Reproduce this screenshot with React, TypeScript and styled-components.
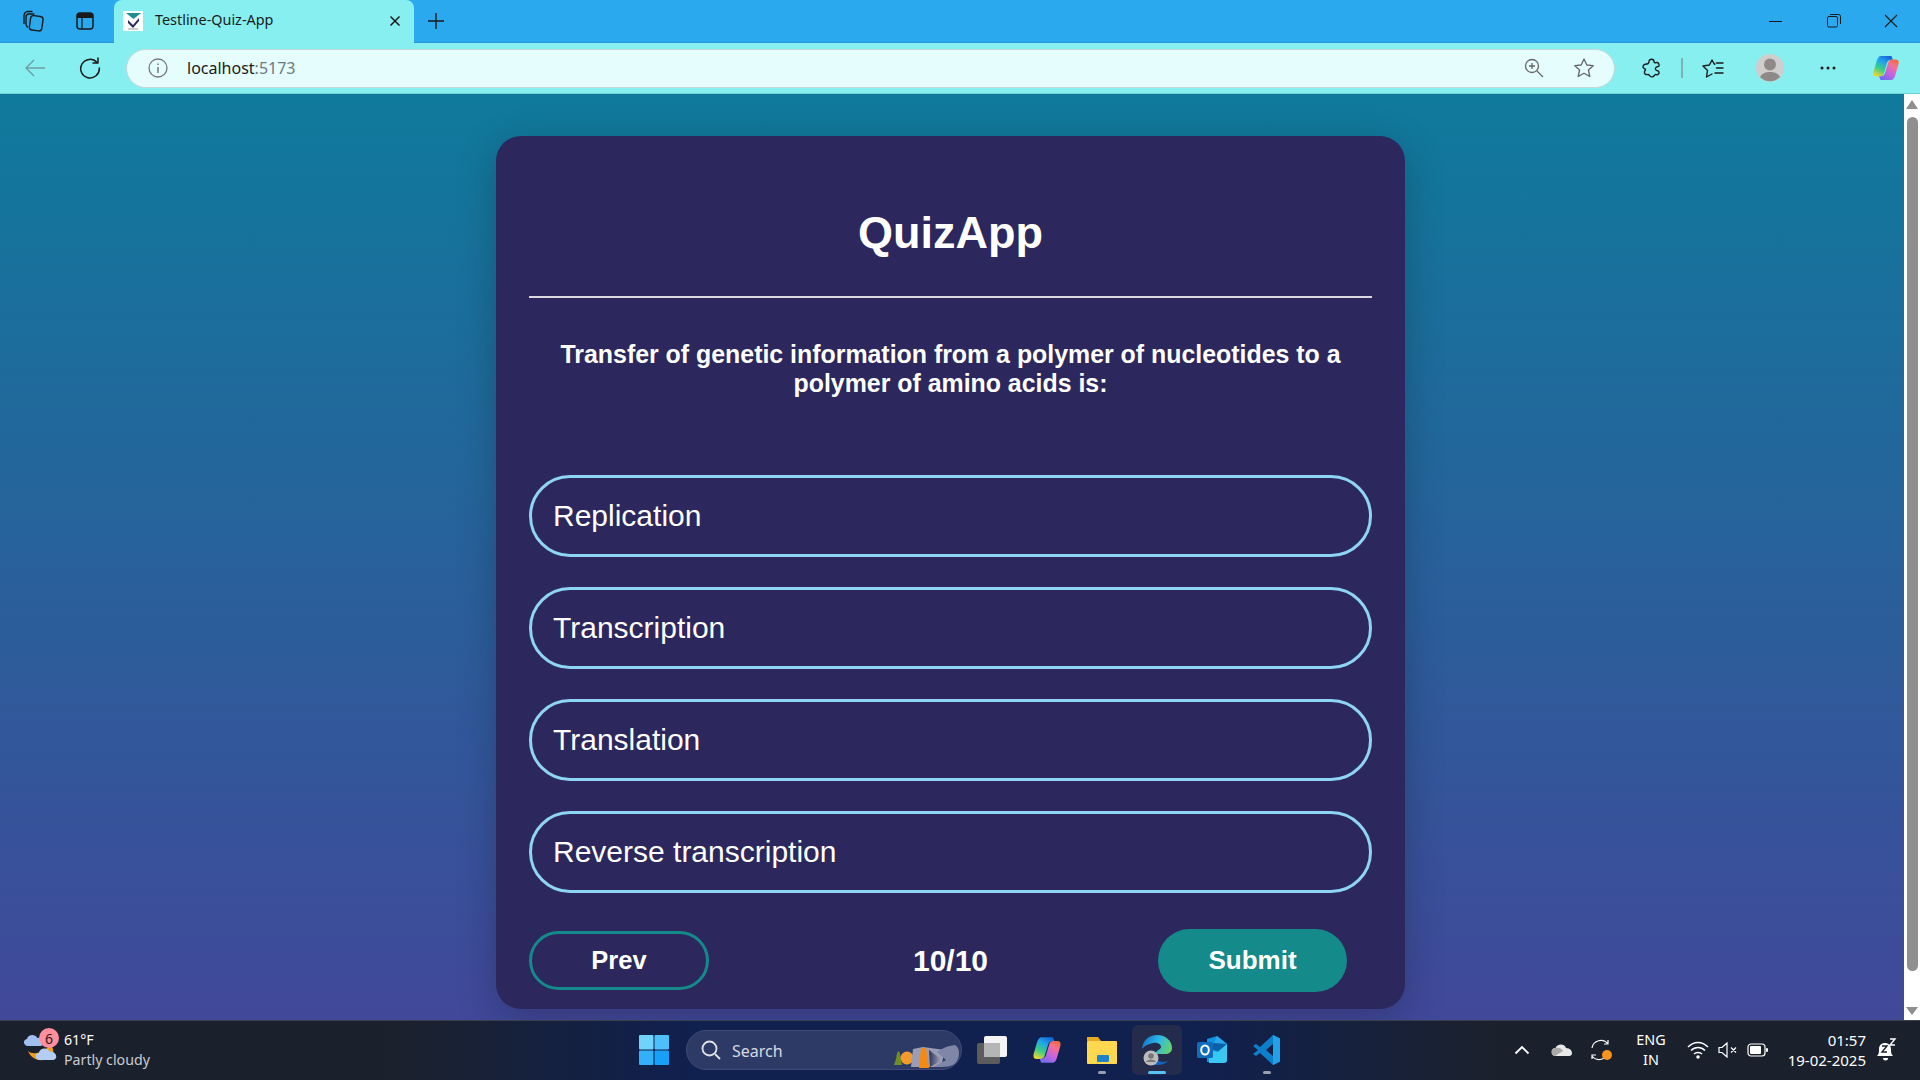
import React from "react";
import styled, { createGlobalStyle } from "styled-components";

const Global = createGlobalStyle`
  html, body { margin: 0; padding: 0; height: 100%; overflow: hidden; }
  body { font-family: "Liberation Sans", Arial, sans-serif; }
  * { box-sizing: border-box; }
`;
const Shell = styled.div`width:1920px;height:1080px;display:flex;flex-direction:column;overflow:hidden;`;
const TabStrip = styled.div`height:43px;background:#2aa9ee;border-bottom:1px solid #2497d6;display:flex;align-items:flex-start;position:relative;`;
const StripIcon = styled.div<{ $w: number }>`width:${p => p.$w}px;height:42px;display:flex;align-items:center;justify-content:center;flex:none;`;
const Tab = styled.div`width:300px;height:43px;margin-left:9px;background:#87eff0;border-radius:8px 8px 0 0;display:flex;align-items:center;padding:0 13px 1px 9px;flex:none;margin-bottom:-1px;position:relative;z-index:1;`;
const Favicon = styled.div`width:20px;height:20px;background:#fff;flex:none;display:flex;align-items:center;justify-content:center;`;
const TabTitle = styled.span`font-family:"Noto Sans","Open Sans",sans-serif;font-size:14.4px;line-height:20px;padding-bottom:2px;color:#1b1b1b;margin-left:12px;flex:1;`;
const WindowControls = styled.div`margin-left:auto;display:flex;height:42px;`;
const WinBtn = styled.div`width:57.5px;height:42px;display:flex;align-items:center;justify-content:center;`;
const Toolbar = styled.div`height:51px;background:#87eff0;border-bottom:1px solid #6fd4d6;display:flex;align-items:center;flex:none;`;
const NavBtn = styled.div<{ $w: number }>`width:${p => p.$w}px;height:40px;display:flex;align-items:center;justify-content:center;flex:none;`;
const Address = styled.div`width:1489px;height:39px;margin-left:16px;border-radius:20px;background:#e6fdfd;border:1px solid #c5d8d8;display:flex;align-items:center;padding:0 5px 0 21px;flex:none;`;
const Url = styled.span`font-family:"Noto Sans","Open Sans",sans-serif;font-size:16px;color:#1a1a1a;margin-left:19px;flex:1;`;
const Port = styled.span`color:#6d7a7d;`;
const AddrIcon = styled.div`width:50px;display:flex;align-items:center;justify-content:center;`;
const ToolRight = styled.div`display:flex;align-items:center;flex:1;padding-left:13px;`;
const Sep = styled.div`width:2px;height:20px;margin-left:5px;background:#7fb2b5;flex:none;`;
const Main = styled.div`height:926px;display:flex;flex:none;`;
const Page = styled.main`flex:1;background:linear-gradient(180deg,#0f7a9c 0%,#41489a 100%);display:flex;justify-content:center;padding:42px 3px 0 0;`;
const Card = styled.section`width:909px;height:873px;background:#2c275c;border-radius:25px;box-shadow:0 10px 40px rgba(0,0,0,.22);padding:0 33px;display:flex;flex-direction:column;`;
const Title = styled.h1`margin:0;height:162px;border-bottom:2px solid #d9d9dd;text-align:center;font-size:45px;line-height:44px;padding-top:75px;color:#fff;font-weight:700;`;
const Question = styled.h2`margin:42px 0 0;height:135px;font-size:24.9px;line-height:29px;text-align:center;color:#fff;font-weight:700;padding:0 20px;`;
const Options = styled.ul`list-style:none;margin:0;padding:0;display:flex;flex-direction:column;gap:30px;`;
const Option = styled.li`height:82px;border:3px solid #8fd4f5;border-radius:41px;display:flex;align-items:center;padding-left:21px;font-size:30px;color:#fff;`;
const Footer = styled.div`display:grid;grid-template-columns:1fr auto 1fr;align-items:center;margin-top:36px;height:63px;`;
const Prev = styled.button`justify-self:start;width:180px;height:59px;border-radius:30px;border:3px solid #158a8a;background:transparent;color:#fff;font:700 25.5px "Liberation Sans",Arial,sans-serif;`;
const Count = styled.div`color:#fff;font-size:30px;font-weight:700;`;
const Submit = styled.button`justify-self:end;width:189px;height:63px;margin-right:25px;border-radius:32px;border:0;background:#158a8a;color:#fff;font:700 26px "Liberation Sans",Arial,sans-serif;`;
const Scrollbar = styled.aside`width:16px;background:#fff;display:flex;flex-direction:column;align-items:center;`;
const Thumb = styled.div`width:11px;height:854px;background:#8f8f8f;border-radius:6px;margin:8px 0 36px;flex:none;`;
const Arrow = styled.div<{ $up?: boolean }>`width:0;height:0;border-left:6px solid transparent;border-right:6px solid transparent;${p => p.$up ? "border-bottom:9px solid #8f8f8f;margin-top:6px;" : "border-top:8px solid #8f8f8f;"}`;
const Taskbar = styled.footer`height:60px;flex:none;background:linear-gradient(90deg,#1b212c 0%,#1b212c 20%,#10204f 36%,#10204f 62%,#1b212c 78%,#1b212c 100%);border-top:1px solid #3a3f4b;padding-bottom:1px;display:flex;align-items:center;position:relative;font-family:"Noto Sans","Open Sans",sans-serif;color:#fff;`;
const Weather = styled.div`width:639px;display:flex;align-items:center;padding-left:24px;flex:none;`;
const WeatherIcon = styled.div`width:40px;height:44px;position:relative;flex:none;`;
const Badge = styled.span`position:absolute;left:15px;top:0;width:20px;height:20px;border-radius:50%;background:#ff8f9c;color:#1b1b1b;font-size:14px;display:flex;align-items:center;justify-content:center;`;
const WeatherText = styled.div`font-size:14.2px;line-height:20px;`;
const Muted = styled.div`color:#c9ccd1;`;
const Search = styled.div`width:276px;height:40px;margin-left:17px;border-radius:20px;background:#2e3a66;border:1px solid #3f4a75;display:flex;align-items:center;padding-left:13px;font-size:16px;color:#d6d9e2;position:relative;flex:none;`;
const SearchLabel = styled.span`margin:1px 0 0 10px;`;
const SearchArt = styled.svg`position:absolute;right:0;top:13px;`;
const Apps = styled.div`display:flex;align-items:center;margin-left:2px;flex:none;`;
const AppIcon = styled.div<{ $active?: boolean }>`width:50px;height:50px;margin:0 2.5px;display:flex;align-items:center;justify-content:center;border-radius:6px;position:relative;background:${p => p.$active ? "#252b4a" : "transparent"};`;
const Dot = styled.span<{ $active?: boolean }>`position:absolute;bottom:1px;left:50%;transform:translateX(-50%);width:${p => p.$active ? 18 : 8}px;height:3px;border-radius:2px;background:${p => p.$active ? "#56c2f5" : "#9aa0ab"};`;
const Tray = styled.div`margin-left:auto;display:flex;align-items:center;height:100%;padding-right:14px;`;
const TrayIcon = styled.div<{ $w: number }>`width:${p => p.$w}px;display:flex;align-items:center;justify-content:center;flex:none;`;
const Lang = styled.div`width:58px;text-align:center;font-size:14.4px;line-height:20px;flex:none;`;
const Clock = styled.div`width:90px;text-align:right;font-size:15px;line-height:20px;flex:none;`;

const s = { fill: "none", stroke: "#1a1a1a", strokeWidth: 1.4, strokeLinecap: "round", strokeLinejoin: "round" } as const;

const Copilot = ({ size, id }: { size: number; id: string }) => (
  <svg width={size} height={size} viewBox="0 0 28 28">
    <defs>
      <linearGradient id={`${id}a`} x1=".7" y1="0" x2=".2" y2="1"><stop offset="0" stopColor="#1668d8" /><stop offset=".3" stopColor="#1fa5ec" /><stop offset=".65" stopColor="#3ccf84" /><stop offset="1" stopColor="#f6d52e" /></linearGradient>
      <linearGradient id={`${id}b`} x1=".8" y1="0" x2=".2" y2="1"><stop offset="0" stopColor="#6d6bf0" /><stop offset=".4" stopColor="#c565e0" /><stop offset=".75" stopColor="#f8708e" /><stop offset="1" stopColor="#f56a3a" /></linearGradient>
    </defs>
    <path d="M9 2H19.500L21 6Q16.500 5 15 9L12 19Q11 22.500 8 22.500H4.500Q.5 22.500 1.500 18L4.500 7.500Q6 2 9 2z" fill={`url(#${id}a)`} />
    <path d="M9 2H19.500L21 6Q16.500 5 15 9L12 19Q11 22.500 8 22.500H4.500Q.5 22.500 1.500 18L4.500 7.500Q6 2 9 2z" fill={`url(#${id}b)`} transform="rotate(180 14 14)" />
  </svg>
);

const cloud = (x: number, y: number, k: number) =>
  `M${x} ${y}c${-4 * k} 0 ${-5 * k} ${-5 * k} ${-1 * k} ${-6 * k}c${1 * k} ${-4 * k} ${7 * k} ${-5 * k} ${9 * k} ${-1 * k}c${5 * k} ${-1 * k} ${8 * k} ${6 * k} ${3 * k} ${7 * k}z`;

export default function App() {
  return (
    <Shell>
      <Global />
      <TabStrip>
        <StripIcon $w={65}>
          <svg width="22" height="22" viewBox="0 0 22 22" {...s}><rect x="8" y="6" width="12.500" height="14.500" rx="3" transform="rotate(8 14 13)" /><path d="M5.500 17c-1-1-1.500-2-1.500-3V7c0-2 1-3 3-3h5M2 13.500V6c0-2.500 1.500-4.500 4-4.500h4" /></svg>
        </StripIcon>
        <StripIcon $w={40}>
          <svg width="20" height="20" viewBox="0 0 20 20"><rect x="2" y="2" width="16" height="16" rx="3" fill="none" stroke="#1a1a1a" strokeWidth="1.500" /><path d="M2 5a3 3 0 0 1 3-3h10a3 3 0 0 1 3 3v2H2z" fill="#1a1a1a" /><path d="M7 7v11" stroke="#1a1a1a" strokeWidth="1.200" /></svg>
        </StripIcon>
        <Tab>
          <Favicon>
            <svg width="17" height="18" viewBox="0 0 17 18"><path d="M1 1h15l-7.500 6z" fill="#1d8f8c" /><path d="M3 8l5 5 6-7v3l-6 7-5-5z" fill="#2d275d" /><path d="M3 17h10" stroke="#99a" strokeWidth="1" /></svg>
          </Favicon>
          <TabTitle>Testline-Quiz-App</TabTitle>
          <svg width="12" height="12" viewBox="0 0 12 12" fill="none" stroke="#1a1a1a" strokeWidth="1.500"><path d="M1.500 1.500l9 9M10.500 1.500l-9 9" /></svg>
        </Tab>
        <StripIcon $w={44}>
          <svg width="18" height="18" viewBox="0 0 18 18" fill="none" stroke="#1a1a1a" strokeWidth="1.400"><path d="M9 1v16M1 9h16" /></svg>
        </StripIcon>
        <WindowControls>
          <WinBtn><svg width="14" height="14" viewBox="0 0 14 14" stroke="#1a1a1a"><path d="M0 7.500h13" /></svg></WinBtn>
          <WinBtn><svg width="14" height="14" viewBox="0 0 14 14" fill="none" stroke="#1a1a1a"><rect x=".5" y="2.500" width="10" height="10.500" rx="1.500" /><path d="M3 .5h8.500a2 2 0 0 1 2 2V10" /></svg></WinBtn>
          <WinBtn><svg width="14" height="14" viewBox="0 0 14 14" fill="none" stroke="#1a1a1a" strokeWidth="1.100"><path d="M1 1l12 12M13 1L1 13" /></svg></WinBtn>
        </WindowControls>
      </TabStrip>
      <Toolbar>
        <NavBtn $w={70}>
          <svg width="22" height="20" viewBox="0 0 22 20" fill="none" stroke="#6e9ea2" strokeWidth="1.400"><path d="M21 10H2M10 2l-8 8 8 8" /></svg>
        </NavBtn>
        <NavBtn $w={40}>
          <svg width="22" height="22" viewBox="0 0 22 22" {...s} strokeWidth={1.500}><path d="M18 5.500A9.300 9.300 0 1 0 20.300 11" /><path d="M19 1v5h-5" /></svg>
        </NavBtn>
        <Address>
          <svg width="20" height="20" viewBox="0 0 20 20" fill="none" stroke="#777"><circle cx="10" cy="10" r="9" strokeWidth="1.300" /><path d="M10 9v6" strokeWidth="1.500" /><path d="M10 5.500v1.500" strokeWidth="1.500" /></svg>
          <Url>localhost<Port>:5173</Port></Url>
          <AddrIcon>
            <svg width="20" height="20" viewBox="0 0 20 20" fill="none" stroke="#666" strokeWidth="1.300"><circle cx="8" cy="8" r="6.500" /><path d="M13 13l6 6M8 5v6M5 8h6" /></svg>
          </AddrIcon>
          <AddrIcon>
            <svg width="22" height="22" viewBox="0 0 22 22" fill="none" stroke="#666" strokeWidth="1.300" strokeLinejoin="round"><path d="M11 2l2.800 6 6.400.7-4.800 4.300 1.400 6.500L11 16.200 5.200 19.500 6.600 13 1.800 8.700 8.200 8z" /></svg>
          </AddrIcon>
        </Address>
        <ToolRight>
          <NavBtn $w={48}>
            <svg width="20" height="20" viewBox="0 0 20 20" {...s}><path d="M7 3.500C7 .5 12 .5 12 3.500c0 1 1 1.500 2 1.200 2-.7 3.500 1 3 3-.3 1-1.500.8-2.500 1.300-1.500.8-1.500 2.500 0 3.300 1 .5 2.300.5 2.500 1.700.3 2-1 3-3 2.600-1-.2-1.500.4-2 1.200-1 1.600-3.500 1.300-4.500-.3-.5-.8-1-1.100-2-.9-2 .3-3.500-1-3-2.900.3-1 1-1.300 1-2.200S1 10.500 1 9c0-2 2-3.300 4-3 1 .1 2-1.300 2-2.500z" /></svg>
          </NavBtn>
          <Sep />
          <NavBtn $w={60}>
            <svg width="22" height="19" viewBox="0 0 22 19" {...s}><path d="M13 5l-.5.300L10 1 7.400 6 1 7l4.500 4.500L4.500 18 10 15M14.500 4H21M14.500 9H21M13 14H21" /></svg>
          </NavBtn>
          <NavBtn $w={54}>
            <svg width="28" height="28" viewBox="0 0 28 28"><circle cx="14" cy="14" r="14" fill="#cfcecd" /><circle cx="14" cy="10.500" r="6" fill="#8d8a88" /><path d="M4 23c2-4 6-5 10-5s8 1 10 5a14 14 0 0 1-20 0z" fill="#8d8a88" /></svg>
          </NavBtn>
          <NavBtn $w={62}>
            <svg width="16" height="4" viewBox="0 0 16 4" fill="#1a1a1a"><circle cx="2" cy="2" r="1.500" /><circle cx="8" cy="2" r="1.500" /><circle cx="14" cy="2" r="1.500" /></svg>
          </NavBtn>
          <NavBtn $w={54}><Copilot size={28} id="cpa" /></NavBtn>
        </ToolRight>
      </Toolbar>
      <Main>
        <Page>
          <Card>
            <Title>QuizApp</Title>
            <Question>Transfer of genetic information from a polymer of nucleotides to a polymer of amino acids is:</Question>
            <Options>
              <Option>Replication</Option>
              <Option>Transcription</Option>
              <Option>Translation</Option>
              <Option>Reverse transcription</Option>
            </Options>
            <Footer>
              <Prev>Prev</Prev>
              <Count>10/10</Count>
              <Submit>Submit</Submit>
            </Footer>
          </Card>
        </Page>
        <Scrollbar>
          <Arrow $up />
          <Thumb />
          <Arrow />
        </Scrollbar>
      </Main>
      <Taskbar>
        <Weather>
          <WeatherIcon>
            <svg width="34" height="44" viewBox="0 0 34 44">
              <path d="M4 23c3 3 10 3 14 0 4-2 7-4 8-6 5 3 4 10-1 13-6 4-17 3-21-7z" fill="#f39b1f" />
              <path d={cloud(4, 18, 1.150)} fill="#9fc0f0" />
              <path d={cloud(16, 32, 1.200)} fill="#b3cdf3" />
            </svg>
            <Badge>6</Badge>
          </WeatherIcon>
          <WeatherText>61°F<Muted>Partly cloudy</Muted></WeatherText>
        </Weather>
        <svg width="30" height="30" viewBox="0 0 30 30" style={{ flex: "none" }}>
          <rect x="0" y="0" width="14.500" height="14.500" rx="1" fill="#6fd3fb" /><rect x="15.500" y="0" width="14.500" height="14.500" rx="1" fill="#4dc0fb" />
          <rect x="0" y="15.500" width="14.500" height="14.500" rx="1" fill="#33b0fa" /><rect x="15.500" y="15.500" width="14.500" height="14.500" rx="1" fill="#16a0f8" />
        </svg>
        <Search>
          <svg width="22" height="22" viewBox="0 0 22 22" fill="none" stroke="#dfe3ea" strokeWidth="1.800"><circle cx="9.500" cy="9.500" r="7" /><path d="M15 15l5 5" /></svg>
          <SearchLabel>Search</SearchLabel>
          <SearchArt width="68" height="24" viewBox="0 0 68 24">
            <defs>
              <linearGradient id="rock" x1="0" y1="0" x2="1" y2="0"><stop offset="0" stopColor="#2b3358" /><stop offset="1" stopColor="#a8adc5" /></linearGradient>
            </defs>
            <path d="M1 21l2-6 1-6 2-2 1 3 1 6 1 5z" fill="#6f8f22" />
            <circle cx="14" cy="14" r="6.500" fill="#f39a2b" />
            <path d="M20 5l10-2 22 3-4 17H18z" fill="#9a9db5" />
            <path d="M26 24l2-20h5l3 20z" fill="#f58a12" />
            <path d="M36 6l13 10-12 7z" fill="url(#rock)" />
            <path d="M44 8c4-3 10-6 18-7 4 2 5 8 3 14-2 5-6 8-16 8h-9l13-7z" fill="#7f86a8" />
          </SearchArt>
        </Search>
        <Apps>
          <AppIcon>
            <svg width="30" height="28" viewBox="0 0 30 28"><rect x="0" y="7" width="23" height="21" rx="2" fill="#5c5c5c" /><rect x="7" y="0" width="23" height="21" rx="2" fill="#f4f4f4" /><rect x="7" y="7" width="16" height="14" fill="#b5b5b5" /></svg>
          </AppIcon>
          <AppIcon><Copilot size={30} id="cpb" /></AppIcon>
          <AppIcon>
            <svg width="32" height="30" viewBox="0 0 32 30"><path d="M1 2h11l3 4h-14z" fill="#e8a81f" /><rect x="1" y="6" width="30" height="23" rx="1" fill="#ffd84f" /><rect x="11" y="20" width="12" height="7" rx="1" fill="#1e82c8" /></svg>
            <Dot />
          </AppIcon>
          <AppIcon $active>
            <svg width="32" height="32" viewBox="0 0 32 32">
              <defs>
                <linearGradient id="edg" x1="0" y1=".3" x2="1" y2=".6"><stop offset="0" stopColor="#1172c6" /><stop offset=".5" stopColor="#2cb8e8" /><stop offset="1" stopColor="#66d36e" /></linearGradient>
              </defs>
              <path d="M1 15C2 6 8 1 16 1c9 0 15 6 15 13 0 4-3 6-7 6h-9c-1-4 5-4 5-7 0-3-4-5-8-4-5 1-9 3-11 6z" fill="url(#edg)" />
              <path d="M14 19c-1 6 4 11 13 8-3 3-7 4-11 4-5 0-9-2-11-6 1-4 5-7 9-6z" fill="#1266c2" />
              <circle cx="10" cy="24" r="7.500" fill="#bdbdbd" /><circle cx="10" cy="22" r="2.800" fill="#777" /><path d="M5 28c1-3.500 9-3.500 10 0z" fill="#777" />
            </svg>
            <Dot $active />
          </AppIcon>
          <AppIcon>
            <svg width="32" height="30" viewBox="0 0 32 30"><path d="M11 4l10-3 10 8v16a2 2 0 0 1-2 2H11z" fill="#1490df" /><path d="M21 1l10 8-7 3-6-4z" fill="#28a8ea" /><path d="M12 13l6-5 13 1-9 7z" fill="#0a5fa8" /><path d="M13 15l9 2 9-8v16a3 3 0 0 1-3 3H13z" fill="#38c8f2" /><rect x="1" y="7" width="16" height="16" rx="1.500" fill="#0f6cbd" /><ellipse cx="9" cy="15" rx="3.800" ry="4.600" fill="none" stroke="#fff" strokeWidth="2" /></svg>
          </AppIcon>
          <AppIcon>
            <svg width="28" height="32" viewBox="0 0 28 32"><path fillRule="evenodd" d="M20 1L7 13 3 10 0 12l5 4-5 4 3 2 4-3 13 12 7-3.500v-23zM20 10l-7 6 7 6z" fill="#0d7fca" /><path d="M20 1l7 3.500v23L20 31z" fill="#1fa2ea" /></svg>
            <Dot />
          </AppIcon>
        </Apps>
        <Tray>
          <TrayIcon $w={40}><svg width="16" height="10" viewBox="0 0 16 10" fill="none" stroke="#fff" strokeWidth="1.800"><path d="M1.500 8.500L8 2l6.500 6.500" /></svg></TrayIcon>
          <TrayIcon $w={40}><svg width="22" height="14" viewBox="0 0 22 14"><path d="M5 13a4 4 0 0 1-.5-8C6 1 13 0 15 5c4 0 6 3 6 5s-1 3-3 3z" fill="#e8e8e8" /><path d="M5 5c3-1 6 1 7 3l-8 5a4 4 0 0 1 1-8z" fill="#a9a9a9" /></svg></TrayIcon>
          <TrayIcon $w={40}><svg width="24" height="24" viewBox="0 0 24 24" fill="none" stroke="#fff" strokeWidth="1.200"><path d="M2 10a9 9 0 0 1 16-4M18 2v4h-4M18 14a9 9 0 0 1-16 4M2 21v-4h4" /><circle cx="17" cy="17" r="5" fill="#f7931e" stroke="none" /></svg></TrayIcon>
          <Lang>ENG<br />IN</Lang>
          <TrayIcon $w={36}><svg width="22" height="18" viewBox="0 0 22 18" fill="none" stroke="#fff" strokeWidth="1.500"><path d="M1 6c6-6 14-6 20 0M4 9.500c4-4 10-4 14 0M7 13c2-2 6-2 8 0" /><circle cx="11" cy="16" r="1" fill="#fff" /></svg></TrayIcon>
          <TrayIcon $w={23}><svg width="20" height="16" viewBox="0 0 20 16" fill="none" stroke="#fff" strokeWidth="1.200"><path d="M1 5.500h3L9 1v14l-5-4.500H1zM13 5.500l5 5M18 5.500l-5 5" /></svg></TrayIcon>
          <TrayIcon $w={37}><svg width="21" height="14" viewBox="0 0 21 14"><rect x="1" y="1" width="17" height="12" rx="3" fill="none" stroke="#fff" strokeWidth="1.200" /><rect x="3" y="3" width="11" height="8" rx="1" fill="#fff" /><rect x="19" y="5" width="2" height="4" rx="1" fill="#fff" /></svg></TrayIcon>
          <Clock>01:57<br />19-02-2025</Clock>
          <TrayIcon $w={40}><svg width="22" height="24" viewBox="0 0 22 24"><path d="M2 18c2-2 2-4 2-7 0-4 3-6 6-6s6 2 6 6c0 3 0 5 2 7z" fill="#fff" /><path d="M8 20h5a2.500 2.500 0 0 1-5 0z" fill="#fff" /><path d="M7 8h5l-5 6h5" fill="none" stroke="#1b212c" strokeWidth="1.400" /><path d="M15 1h5l-5 6h5" fill="none" stroke="#fff" strokeWidth="1.400" /></svg></TrayIcon>
        </Tray>
      </Taskbar>
    </Shell>
  );
}
